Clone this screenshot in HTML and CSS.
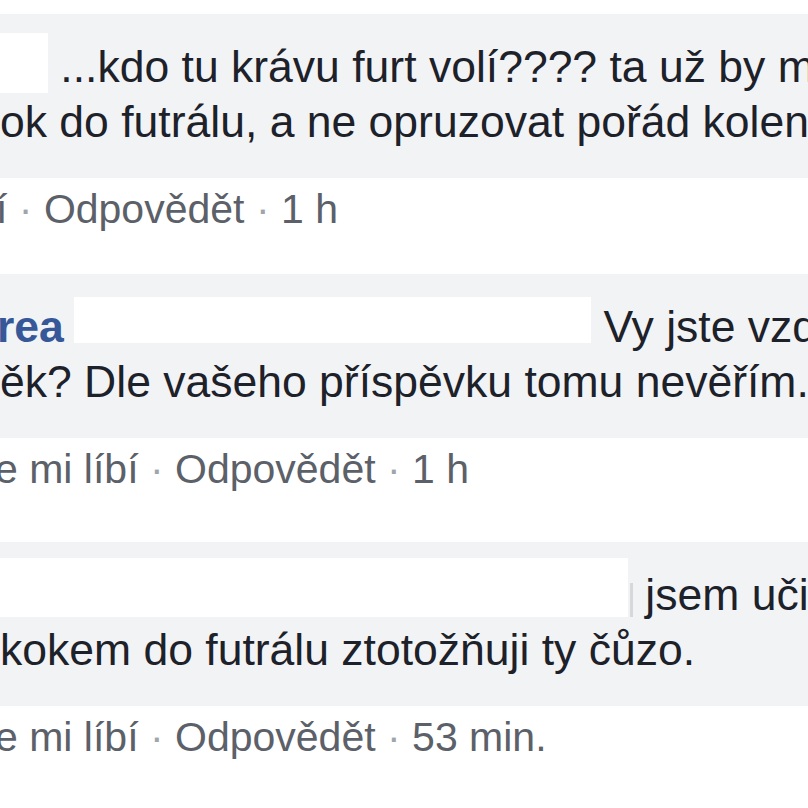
FILE: index.html
```html
<!DOCTYPE html>
<html lang="cs">
<head>
    <meta charset="UTF-8">
    <meta name="viewport" content="width=device-width, initial-scale=1.0">
    <title>Komentáře</title>
    <link rel="stylesheet" href="styles.css">
</head>
<body>
    <div class="thread">
        <div class="comment comment--first">
            <div class="bubble">
                <p class="line"><span class="redacted redacted--one"></span> ...kdo tu krávu furt volí???? ta už by m</p>
                <p class="line">ok do futrálu, a ne opruzovat pořád kolen</p>
            </div>
            <div class="actions actions--short">
                <span class="link">í</span> <span class="sep">·</span> <span class="link">Odpovědět</span> <span class="sep">·</span> <span class="time">1 h</span>
            </div>
        </div>

        <div class="comment comment--second">
            <div class="bubble">
                <p class="line"><span class="name">rea</span> <span class="redacted redacted--two"></span> Vy jste vzd</p>
                <p class="line">ěk? Dle vašeho příspěvku tomu nevěřím.</p>
            </div>
            <div class="actions">
                <span class="link">e mi líbí</span> <span class="sep">·</span> <span class="link">Odpovědět</span> <span class="sep">·</span> <span class="time">1 h</span>
            </div>
        </div>

        <div class="comment comment--third">
            <div class="bubble">
                <p class="line"><span class="redacted redacted--three"></span><span class="tail"></span> jsem uči</p>
                <p class="line">kokem do futrálu ztotožňuji ty čůzo.</p>
            </div>
            <div class="actions">
                <span class="link">e mi líbí</span> <span class="sep">·</span> <span class="link">Odpovědět</span> <span class="sep">·</span> <span class="time">53 min.</span>
            </div>
        </div>
    </div>
</body>
</html>
```

FILE: styles.css
```css
html, body {
    overflow: hidden;
}
body {
    font-family: "Liberation Sans", Arial, sans-serif;
    color: #1d2129;
    background-color: #fff;
    margin: 0;
    padding: 0;
}
.thread {
    width: 808px;
}
.comment--first {
    margin-top: 14px;
}
.comment--second {
    margin-top: 40px;
}
.comment--third {
    margin-top: 48px;
}
.bubble {
    background-color: #f2f3f5;
    padding: 25px 0 29px;
}
.line {
    margin: 0;
    font-size: 44.5px;
    line-height: 55px;
    white-space: nowrap;
}
.name {
    color: #365899;
    font-weight: bold;
    margin-left: -3px;
}
/* white boxes covering the names */
.redacted {
    display: inline-block;
    vertical-align: top;
    background-color: #fff;
}
.redacted--one {
    width: 48px;
    height: 60px;
    margin-top: -6px;
}
.redacted--two {
    width: 517px;
    height: 46px;
    margin-top: -2px;
    margin-left: -2px;
}
.redacted--three {
    width: 628px;
    height: 59px;
    margin-top: -9px;
}
.tail {
    display: inline-block;
    vertical-align: top;
    width: 3px;
    height: 34px;
    margin: 16px 0 0 2px;
    background-color: #d6d8dc;
}
.actions {
    margin-top: 6px;
    margin-left: -5px;
    font-size: 41px;
    line-height: 50px;
    white-space: nowrap;
}
.actions--short {
    margin-left: -4px;
}
.link, .time {
    color: #5b6069;
}
.sep {
    color: #a0a4ab;
}
```
